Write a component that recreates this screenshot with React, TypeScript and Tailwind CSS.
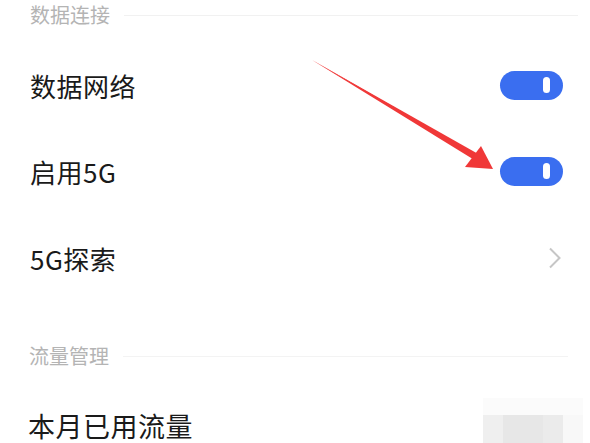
import React from 'react';

const font = { fontFamily: '"Noto Sans CJK SC", "Noto Sans", sans-serif' };

function Toggle() {
  return (
    <div className="w-[63px] h-[29px] rounded-full bg-[#3a6ef0] flex items-center justify-end pr-[13px]">
      <div className="w-[7px] h-[16px] rounded-full bg-white" />
    </div>
  );
}

function Header({ title }: { title: string }) {
  return (
    <div className="flex items-center pl-[30px] pr-[12px] gap-[14px]">
      <span className="text-[20px] leading-[30px] text-[#b4b4b4]">{title}</span>
      <div className="flex-1 h-px bg-[#f1f1f1]" />
    </div>
  );
}

function Row({ label, right, h }: { label: string; right?: React.ReactNode; h: string }) {
  return (
    <div className={`flex items-center justify-between pl-[30px] pr-[27px] ${h}`}>
      <span className="text-[26px] text-[#1a1a1a] tracking-[0.5px]">{label}</span>
      {right}
    </div>
  );
}

export default function App() {
  return (
    <div className="relative w-[590px] h-[443px] overflow-hidden bg-white" style={font}>
      <Header title="数据连接" />
      <div className="mt-[12px]">
        <Row label="数据网络" h="h-[86px]" right={<Toggle />} />
        <Row label="启用5G" h="h-[86px]" right={<Toggle />} />
        <div className="flex items-center justify-between pl-[30px] pr-[28px] h-[88px]">
          <span className="text-[26px] text-[#1a1a1a] tracking-[0.5px]">5G探索</span>
          <svg width="14" height="22" viewBox="0 0 14 22" fill="none">
            <path d="M2 1.5 L11.5 11 L2 20.5" stroke="#c6c6c6" strokeWidth="2" />
          </svg>
        </div>
      </div>
      <div className="mt-[34px]">
        <div className="flex items-center pl-[29px] pr-[22px] gap-[14px]">
          <span className="text-[20px] leading-[40px] text-[#b4b4b4]">流量管理</span>
          <div className="flex-1 h-px bg-[#f3f3f3]" />
        </div>
      </div>
      <div className="flex items-start justify-between pl-[28px] h-[98px] pt-[30px]">
        <span className="text-[27px] text-[#1a1a1a] tracking-[0.5px]">本月已用流量</span>
        <div className="flex flex-col mt-[-8px] mr-[7px]">
          <div className="h-[17px] w-[100px] bg-[#fbfbfb]" />
          <div className="flex h-[30px]">
            <div className="w-[20px] bg-[#efefef]" />
            <div className="w-[40px] bg-[#e7e7e7]" />
            <div className="w-[20px] bg-[#ebebeb]" />
            <div className="w-[20px] bg-[#f8f8f8]" />
          </div>
        </div>
      </div>
      <svg className="absolute left-0 top-0 pointer-events-none" width="590" height="443">
        <path d="M312 60 L478 158 L480 155 Z" fill="#f03838" />
        <path d="M312 60 L476 161 L479 156 Z" fill="#f03838" />
        <path d="M493 169 L465 167 L481 146 Z" fill="#f03838" />
      </svg>
    </div>
  );
}
